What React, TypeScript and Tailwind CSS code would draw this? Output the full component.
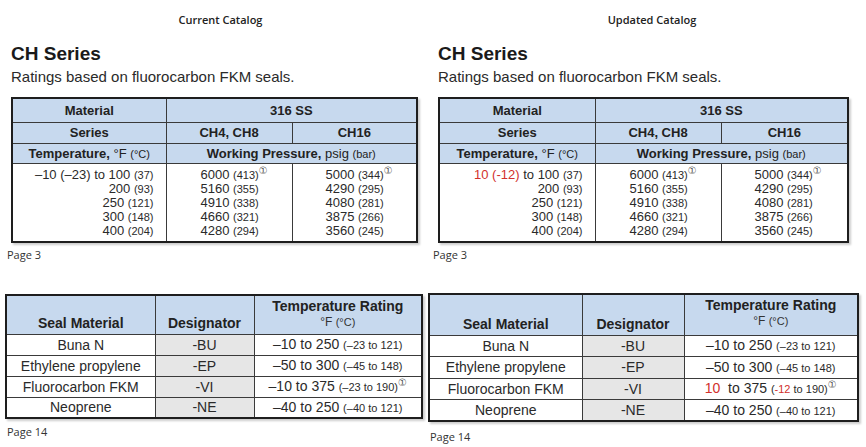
import * as React from "react"

const sans = "font-['Liberation_Sans',Arial,sans-serif]"
const ui = "font-['Open_Sans','Noto_Sans',sans-serif]"

const Circ = () => (
    <span className="relative -top-[5px] text-[10px] text-[#555] leading-none font-['DejaVu_Sans',sans-serif]">①</span>
)
const Sm = ({ children }: { children: React.ReactNode }) => <span className="text-[11px]">{children}</span>
const Red = ({ children }: { children: React.ReactNode }) => <span className="text-[#d2302c]">{children}</span>

type PressureRow = { temp: React.ReactNode; a: React.ReactNode; b: React.ReactNode }

const pressureRows = (updated: boolean): PressureRow[] => [
    {
        temp: updated ? (
            <><Red>10 (-12)</Red> to 100 <Sm>(37)</Sm></>
        ) : (
            <>–10 (–23) to 100 <Sm>(37)</Sm></>
        ),
        a: <>6000 <Sm>(413)</Sm><Circ /></>,
        b: <>5000 <Sm>(344)</Sm><Circ /></>,
    },
    { temp: <>200 <Sm>(93)</Sm></>, a: <>5160 <Sm>(355)</Sm></>, b: <>4290 <Sm>(295)</Sm></> },
    { temp: <>250 <Sm>(121)</Sm></>, a: <>4910 <Sm>(338)</Sm></>, b: <>4080 <Sm>(281)</Sm></> },
    { temp: <>300 <Sm>(148)</Sm></>, a: <>4660 <Sm>(321)</Sm></>, b: <>3875 <Sm>(266)</Sm></> },
    { temp: <>400 <Sm>(204)</Sm></>, a: <>4280 <Sm>(294)</Sm></>, b: <>3560 <Sm>(245)</Sm></> },
]

function PressureTable({ updated, cols }: { updated: boolean; cols: number[] }) {
    const rows = pressureRows(updated)
    const head = "bg-[#c7d9ee] border border-[#3a3a3a] text-center font-bold text-[13px] text-[#222]"
    return (
        <table
            className={`${sans} table-fixed border-collapse border-2 border-[#1e1e1e] shadow-[2px_2px_2px_rgba(0,0,0,0.2)]`}
            style={{ width: cols.reduce((s, c) => s + c, 0) }}
        >
            <colgroup>
                {cols.map((c, i) => <col key={i} style={{ width: c }} />)}
            </colgroup>
            <thead>
                <tr className="h-[24px]">
                    <th className={head}>Material</th>
                    <th className={head} colSpan={2}>316 SS</th>
                </tr>
                <tr className="h-[21px]">
                    <th className={head}>Series</th>
                    <th className={head}>CH4, CH8</th>
                    <th className={head}>CH16</th>
                </tr>
                <tr className="h-[20px]">
                    <th className={head}>
                        Temperature, <span className="font-normal">°F</span> <span className="font-normal text-[11px]">(°C)</span>
                    </th>
                    <th className={head} colSpan={2}>
                        Working Pressure, <span className="font-normal">psig</span> <span className="font-normal text-[11px]">(bar)</span>
                    </th>
                </tr>
            </thead>
            <tbody className="text-[13px] text-[#2a2a2a] leading-[14px]">
                {rows.map((r, i) => {
                    const pad = i === 0 ? "pt-[4px]" : i === rows.length - 1 ? "pb-[3px]" : ""
                    return (
                        <tr key={i}>
                            <td className={`text-right pr-[12px] border-r border-[#3a3a3a] ${pad}`}>{r.temp}</td>
                            <td className={`pl-[34px] border-r border-[#3a3a3a] ${pad}`}>{r.a}</td>
                            <td className={`pl-[33px] ${pad}`}>{r.b}</td>
                        </tr>
                    )
                })}
            </tbody>
        </table>
    )
}

type SealRow = { name: string; code: string; temp: React.ReactNode }

const sealRows = (updated: boolean): SealRow[] => [
    { name: "Buna N", code: "-BU", temp: <>–10 to 250 <Sm>(–23 to 121)</Sm></> },
    { name: "Ethylene propylene", code: "-EP", temp: <>–50 to 300 <Sm>(–45 to 148)</Sm></> },
    {
        name: "Fluorocarbon FKM",
        code: "-VI",
        temp: updated ? (
            <><Red>10</Red>&nbsp; to 375 <Sm>(<Red>-12</Red> to 190)</Sm><Circ /></>
        ) : (
            <>–10 to 375 <Sm>(–23 to 190)</Sm><Circ /></>
        ),
    },
    { name: "Neoprene", code: "-NE", temp: <>–40 to 250 <Sm>(–40 to 121)</Sm></> },
]

function SealTable({ updated, cols, headH, rowH }: { updated: boolean; cols: number[]; headH: number; rowH: number }) {
    const rows = sealRows(updated)
    const head = "bg-[#c7d9ee] border border-[#3a3a3a] text-center font-bold text-[14px] text-[#222]"
    const cell = "border border-[#3a3a3a] text-center leading-[16px]"
    return (
        <table
            className={`${sans} table-fixed border-collapse border-2 border-[#1e1e1e] shadow-[2px_2px_2px_rgba(0,0,0,0.2)]`}
            style={{ width: cols.reduce((s, c) => s + c, 0) }}
        >
            <colgroup>
                {cols.map((c, i) => <col key={i} style={{ width: c }} />)}
            </colgroup>
            <thead>
                <tr style={{ height: headH }}>
                    <th className={`${head} align-bottom pb-[3px] leading-[16px]`}>Seal Material</th>
                    <th className={`${head} align-bottom pb-[3px] leading-[16px]`}>Designator</th>
                    <th className={`${head} align-top pt-[2px] leading-[17px]`}>
                        <div className="text-[14px]">Temperature Rating</div>
                        <div className="font-normal text-[12px] leading-[15px] text-[#333]">°F <span className="text-[11px]">(°C)</span></div>
                    </th>
                </tr>
            </thead>
            <tbody className="text-[14px] text-[#2a2a2a]">
                {rows.map((r) => (
                    <tr key={r.code} style={{ height: rowH }}>
                        <td className={cell}>{r.name}</td>
                        <td className={`${cell} bg-[#e6e6e6]`}>{r.code}</td>
                        <td className={cell}>{r.temp}</td>
                    </tr>
                ))}
            </tbody>
        </table>
    )
}

function TopPanel({ title, updated, cols }: { title: string; updated: boolean; cols: number[] }) {
    return (
        <div className="flex flex-col">
            <div className={`${ui} text-center text-[11px] font-semibold text-[#222] leading-[15px] pt-[12px]`}>{title}</div>
            <div className={`${sans} text-[19px] font-bold text-[#1a1a1a] leading-[22px] mt-[16px]`}>CH Series</div>
            <div className={`${sans} text-[15px] text-[#2a2a2a] leading-[18px] mt-[3px]`}>Ratings based on fluorocarbon FKM seals.</div>
            <div className="mt-[11px]">
                <PressureTable updated={updated} cols={cols} />
            </div>
        </div>
    )
}

export default function App() {
    return (
        <div className="w-[866px] h-[447px] bg-white overflow-hidden">
            <div className="grid grid-cols-[430px_436px]">
                <div className="flex flex-col">
                    <div className="pl-[11px]">
                        <TopPanel title="Current Catalog" updated={false} cols={[154, 126, 125]} />
                    </div>
                    <div className={`${ui} text-[11px] text-[#333] pl-[7px] mt-[4px] leading-[15px]`}>Page 3</div>
                </div>
                <div className="flex flex-col">
                    <div className="pl-[8px]">
                        <TopPanel title="Updated Catalog" updated cols={[156, 126, 127]} />
                    </div>
                    <div className={`${ui} text-[11px] text-[#333] pl-[3px] mt-[4px] leading-[15px]`}>Page 3</div>
                </div>
            </div>
            <div className="grid grid-cols-[425px_441px] mt-[31px]">
                <div className="flex flex-col pl-[5px] pt-[1px]">
                    <SealTable updated={false} cols={[149, 99, 168]} headH={39} rowH={21} />
                    <div className={`${ui} text-[11px] text-[#333] pl-[2px] mt-[5px] leading-[15px]`}>Page 14</div>
                </div>
                <div className="flex flex-col pl-[3px]">
                    <SealTable updated cols={[153, 102, 174]} headH={41} rowH={21.5} />
                    <div className={`${ui} text-[11px] text-[#333] pl-[2px] mt-[7px] leading-[15px]`}>Page 14</div>
                </div>
            </div>
        </div>
    )
}
